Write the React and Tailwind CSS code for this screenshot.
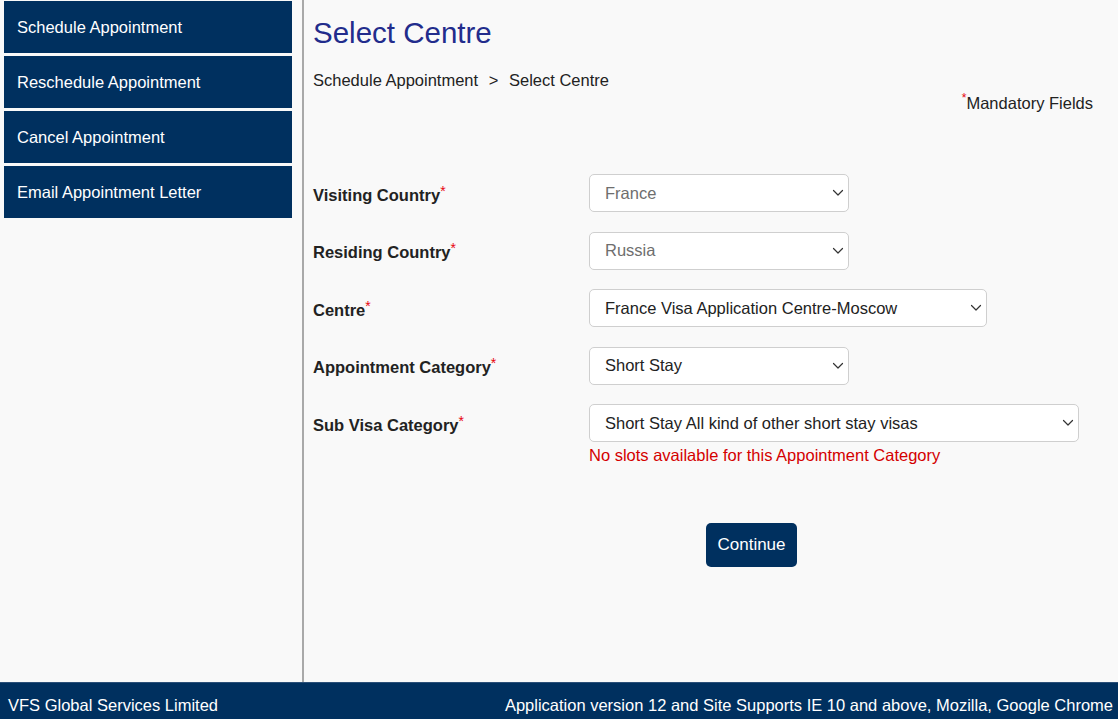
const navy = "bg-[#00305f]";

function Chevron() {
  return (
    <svg width="12" height="8" viewBox="0 0 12 8" className="shrink-0">
      <path d="M1.5 1.5 L6 6 L10.5 1.5" fill="none" stroke="#333" strokeWidth="1.2" strokeLinecap="round" strokeLinejoin="round" />
    </svg>
  );
}

function FakeSelect({ value, width, disabled }) {
  return (
    <div
      className={`flex items-center justify-between h-[38px] pl-[15px] pr-[4px] rounded-[5px] border border-[#cfcfcf] bg-white text-[16.5px] ${
        disabled ? "text-[#6e6e6e]" : "text-[#222]"
      } ${width}`}
    >
      <span>{value}</span>
      <Chevron />
    </div>
  );
}

const navItems = [
  "Schedule Appointment",
  "Reschedule Appointment",
  "Cancel Appointment",
  "Email Appointment Letter",
];

const rows = [
  { label: "Visiting Country", value: "France", width: "w-[260px]", disabled: true },
  { label: "Residing Country", value: "Russia", width: "w-[260px]", disabled: true },
  { label: "Centre", value: "France Visa Application Centre-Moscow", width: "w-[398px]" },
  { label: "Appointment Category", value: "Short Stay", width: "w-[260px]" },
  { label: "Sub Visa Category", value: "Short Stay All kind of other short stay visas", width: "w-[490px]" },
];

export default function App() {
  return (
    <div className="flex flex-col h-[719px] w-[1118px] bg-[#f9f9f9] font-['Liberation_Sans',Arial,sans-serif] text-[16.5px] text-[#222]">
      <div className="flex flex-1 min-h-0">
        {/* Sidebar */}
        <div className="w-[304px] shrink-0 border-r-2 border-[#a9a9a9] pl-[4px] pr-[10px] pt-[1px] flex flex-col gap-[3px]">
          {navItems.map((item) => (
            <div key={item} className={`${navy} h-[52px] flex items-center pl-[13px] text-white`}>
              {item}
            </div>
          ))}
        </div>

        {/* Main */}
        <div className="flex-1 pl-[9px] pr-[25px]">
          <h1 className="text-[29.5px] leading-[36px] text-[#222c8c] mt-[15px]">Select Centre</h1>
          <div className="mt-[19px] leading-[20px]">
            Schedule Appointment <span className="mx-[6px]">&gt;</span> Select Centre
          </div>
          <div className="flex justify-end mt-[2px] leading-[20px]">
            <span className="text-red-600 text-[12px] leading-[12px] self-start">*</span>
            <span className="mt-[1px] mb-[2px]">Mandatory Fields</span>
          </div>

          <div className="mt-[59px] flex flex-col gap-[19.5px]">
            {rows.map((r) => (
              <div key={r.label} className="flex items-center">
                <div className="w-[276px] shrink-0 font-bold pt-[4px]">
                  {r.label}
                  <span className="text-red-600 font-normal relative -top-[5px] text-[14px]">*</span>
                </div>
                <FakeSelect value={r.value} width={r.width} disabled={r.disabled} />
              </div>
            ))}
          </div>
          <div className="ml-[276px] mt-[2px] text-[#d40000] leading-[22px]">
            No slots available for this Appointment Category
          </div>

          <div className="flex mt-[57px] pl-[393px]">
            <button className={`${navy} text-white rounded-[5px] w-[91px] h-[44px] text-[17px]`}>Continue</button>
          </div>
        </div>
      </div>

      {/* Footer */}
      <div className={`${navy} h-[37px] shrink-0 border-t border-[#2a4f78] flex items-center justify-between pl-[8px] pr-[5px] text-white pt-[8px]`}>
        <span>VFS Global Services Limited</span>
        <span>Application version 12 and Site Supports IE 10 and above, Mozilla, Google Chrome</span>
      </div>
    </div>
  );
}
